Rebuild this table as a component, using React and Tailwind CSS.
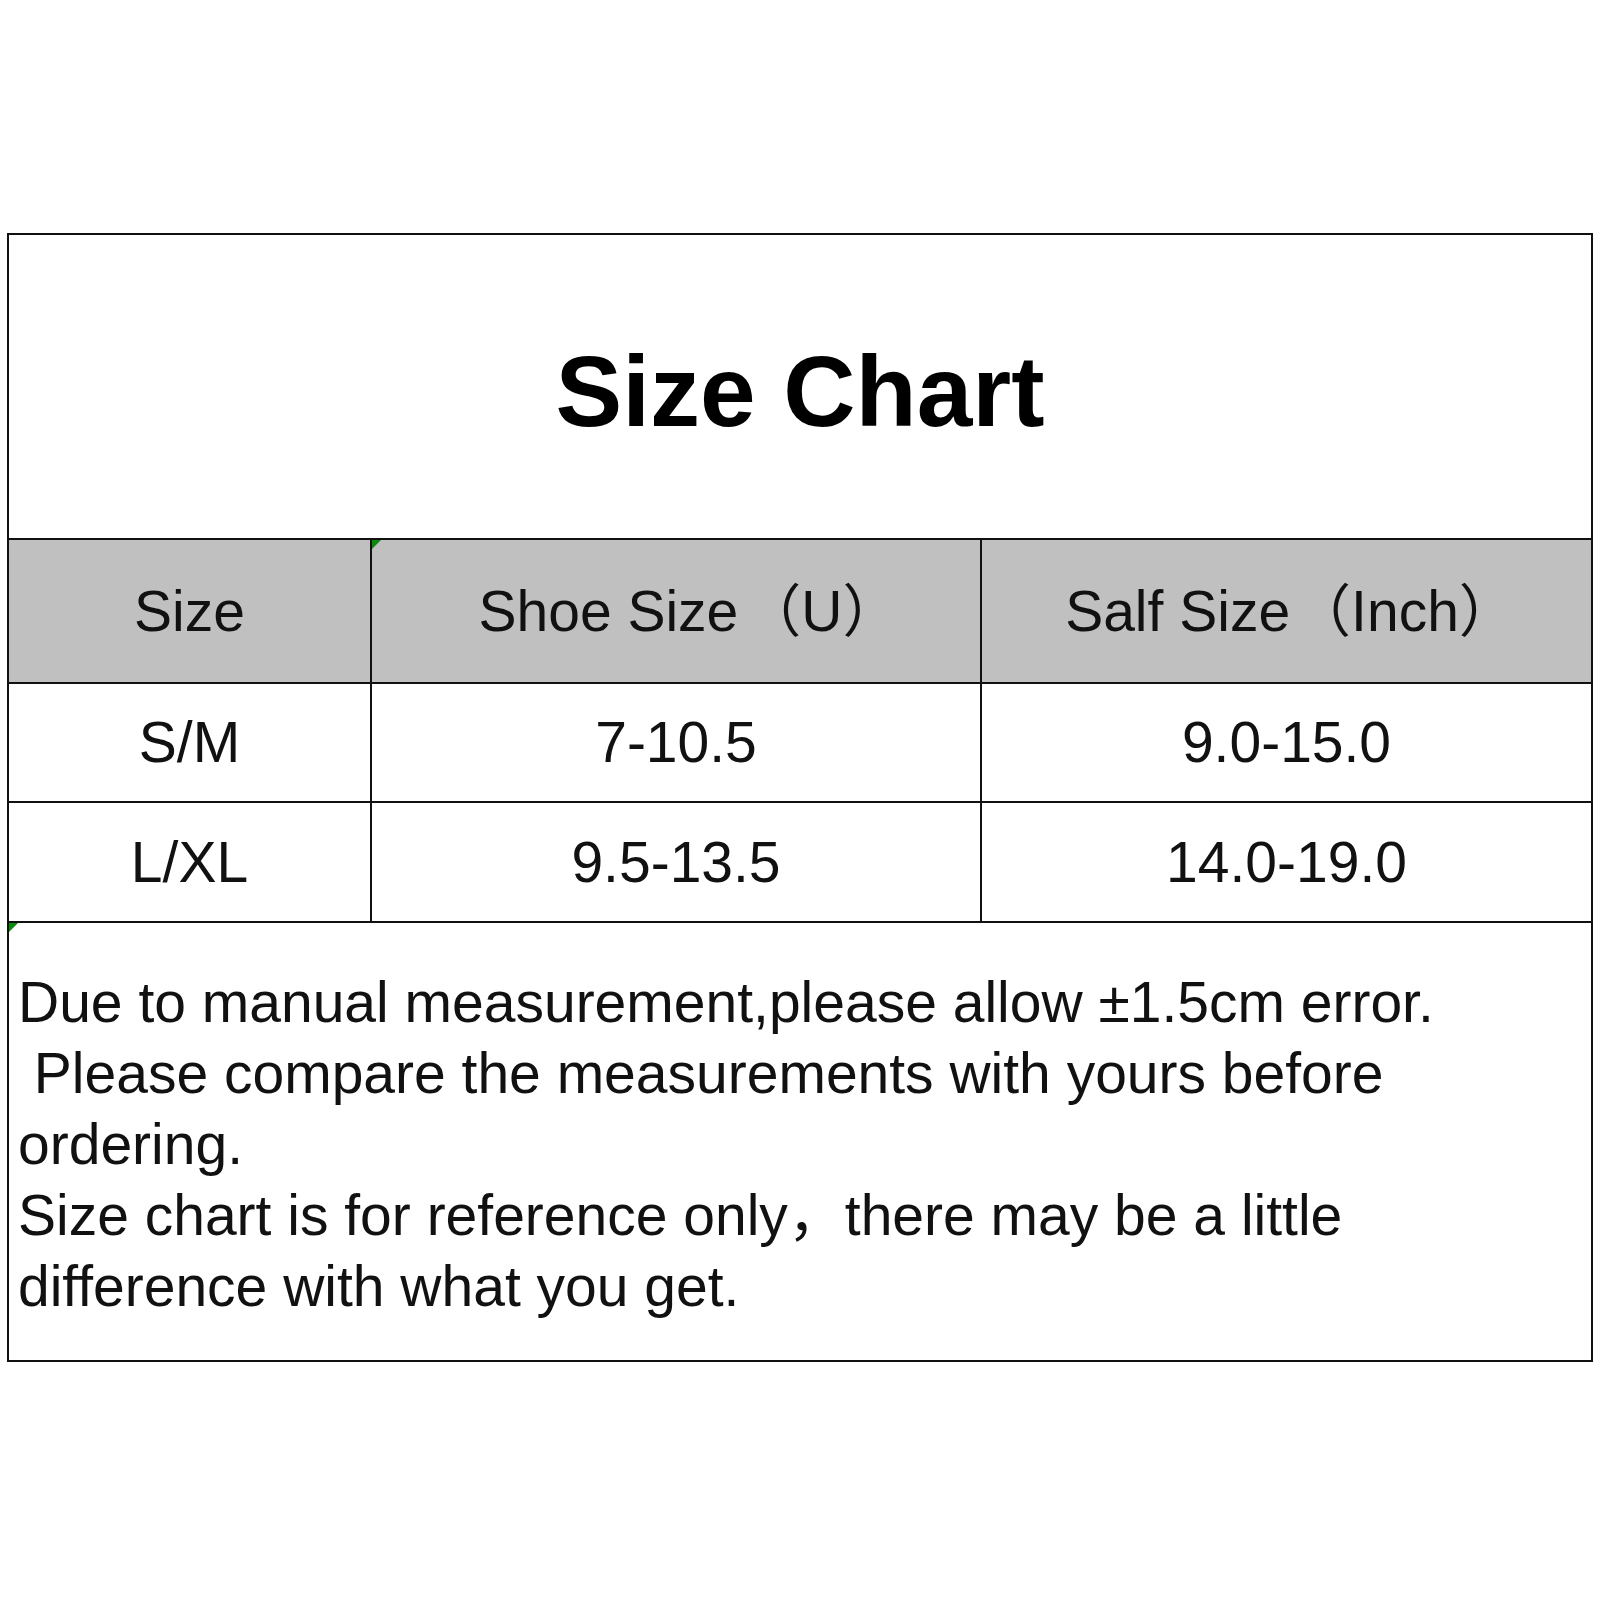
export default function App() {
  const font = { fontFamily: '"Liberation Sans", Arial, "Noto Sans CJK SC", sans-serif' };
  const Tri = () => (
    <span className="absolute left-0 top-0 h-0 w-0 border-t-[9px] border-r-[9px] border-t-[#0a8a0a] border-r-transparent" />
  );
  return (
    <div className="w-[1601px] h-[1601px] bg-white text-[#111]" style={font}>
      <div className="pt-[233px] pl-[7px]">
        <div className="w-[1586px] border-2 border-[#111] flex flex-col">
          <div className="h-[305px] border-b-2 border-[#111] flex items-center justify-center pt-[8px]">
            <span className="text-[100px] leading-none font-bold text-black">Size Chart</span>
          </div>
          <div className="h-[144px] border-b-2 border-[#111] bg-[#c0c0c0] flex text-[57px] leading-none">
            <div className="w-[363px] border-r-2 border-[#111] flex items-center justify-center">Size</div>
            <div className="relative w-[610px] border-r-2 border-[#111] flex items-center justify-center">
              <Tri />
              <span className="pl-[26px]">Shoe Size<span className="ml-[6px]">（U）</span></span>
            </div>
            <div className="flex-1 flex items-center justify-center">
              <span className="pl-[8px]">Salf Size<span className="ml-[4px]">（Inch）</span></span>
            </div>
          </div>
          <div className="h-[119px] border-b-2 border-[#111] flex text-[57px] leading-none">
            <div className="w-[363px] border-r-2 border-[#111] flex items-center justify-center">S/M</div>
            <div className="w-[610px] border-r-2 border-[#111] flex items-center justify-center">7-10.5</div>
            <div className="flex-1 flex items-center justify-center">9.0-15.0</div>
          </div>
          <div className="h-[120px] border-b-2 border-[#111] flex text-[57px] leading-none">
            <div className="w-[363px] border-r-2 border-[#111] flex items-center justify-center">L/XL</div>
            <div className="w-[610px] border-r-2 border-[#111] flex items-center justify-center">9.5-13.5</div>
            <div className="flex-1 flex items-center justify-center">14.0-19.0</div>
          </div>
          <div className="relative h-[437px] pt-[44px] pl-[9px] text-[57px] leading-[71px] whitespace-pre">
            <Tri />
            <div>Due to manual measurement,please allow ±1.5cm error.</div>
            <div> Please compare the measurements with yours before</div>
            <div>ordering.</div>
            <div>Size chart is for reference only，there may be a little</div>
            <div>difference with what you get.</div>
          </div>
        </div>
      </div>
    </div>
  );
}
